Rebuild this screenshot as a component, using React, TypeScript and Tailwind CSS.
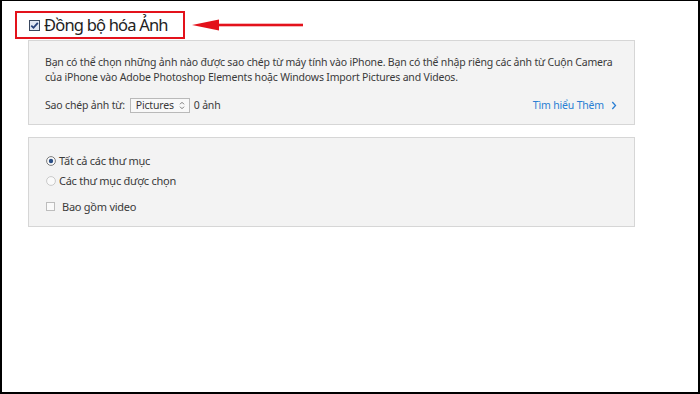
import React from "react";

const font = { fontFamily: '"Noto Sans", "Open Sans", sans-serif' };

function HeaderCheck() {
  return (
    <svg width="11" height="11" viewBox="0 0 11 11" className="shrink-0">
      <rect x="0.5" y="0.5" width="10" height="10" fill="#dfe6f3" stroke="#39475e" />
      <path d="M2.3 5.6 L4.5 7.8 L8.8 2.8" fill="none" stroke="#26417a" strokeWidth="1.8" />
    </svg>
  );
}

function Radio({ checked }: { checked?: boolean }) {
  return (
    <svg width="10" height="10" viewBox="0 0 10 10" className="shrink-0">
      <circle cx="5" cy="5" r="4.4" fill="#fafafa" stroke={checked ? "#7a7a7a" : "#c9c9c9"} />
      {checked && <circle cx="5" cy="5" r="2.2" fill="#2b4f86" />}
    </svg>
  );
}

function Box() {
  return (
    <svg width="9" height="9" viewBox="0 0 9 9" className="shrink-0">
      <rect x="0.5" y="0.5" width="8" height="8" fill="#fafafa" stroke="#bdbdbd" />
    </svg>
  );
}

export default function App() {
  return (
    <div
      className="w-[700px] h-[394px] bg-white border-t border-l-2 border-r-2 border-b-2 border-black overflow-hidden text-[#333] whitespace-nowrap"
      style={font}
    >
      <div className="flex items-center ml-[13px] mt-[10px]">
        <div className="w-[170px] h-[28px] border-2 border-[#e3121b] flex items-center pl-[12px] gap-[4px]">
          <HeaderCheck />
          <span className="text-[16.5px] leading-none text-[#222] tracking-[-0.8px]">Đồng bộ hóa Ảnh</span>
        </div>
        <svg width="115" height="14" viewBox="0 0 115 14" className="ml-[7px]">
          <polygon points="0,7 27,1.5 27,12.5" fill="#e3121b" />
          <rect x="26" y="5.7" width="85" height="2.6" fill="#e3121b" />
        </svg>
      </div>

      <div className="ml-[26px] mt-px w-[607px] h-[85px] bg-[#f3f3f3] border border-[#d6d6d6] pl-[16px] pr-[16px] pt-[14px] text-[10.5px] leading-[15px] text-[#3a3a3a] tracking-[-0.18px]">
        <p>
          Bạn có thể chọn những ảnh nào được sao chép từ máy tính vào iPhone. Bạn có thể nhập riêng các ảnh từ Cuộn Camera
          <br />
          của iPhone vào Adobe Photoshop Elements hoặc Windows Import Pictures and Videos.
        </p>
        <div className="flex items-center mt-[13px]">
          <span>Sao chép ảnh từ:</span>
          <div className="ml-[5px] h-[15px] w-[60px] border border-[#b9b9b9] bg-[#f8f8f8] flex items-center justify-between pl-[5px] pr-[4px]">
            <span className="leading-none">Pictures</span>
            <svg width="6" height="9" viewBox="0 0 6 9">
              <path d="M1 3.3 L3 1.3 L5 3.3 M1 5.7 L3 7.7 L5 5.7" fill="none" stroke="#777" strokeWidth="1" />
            </svg>
          </div>
          <span className="ml-[4px]">0 ảnh</span>
          <span className="ml-auto mr-[1px] flex items-center gap-[7px] text-[#2a7fd4]">
            Tìm hiểu Thêm
            <svg width="6" height="9" viewBox="0 0 6 9">
              <path d="M1.3 1 L4.5 4.5 L1.3 8" fill="none" stroke="#2a7fd4" strokeWidth="1.3" />
            </svg>
          </span>
        </div>
      </div>

      <div className="ml-[26px] mt-[12px] w-[607px] h-[90px] bg-[#f3f3f3] border border-[#d6d6d6] pl-[17px] pt-[15px] text-[11px] leading-[15px] text-[#3a3a3a] tracking-[-0.25px]">
        <div className="flex items-center gap-[3px]">
          <Radio checked />
          <span>Tất cả các thư mục</span>
        </div>
        <div className="flex items-center gap-[3px] mt-[5px]">
          <Radio />
          <span>Các thư mục được chọn</span>
        </div>
        <div className="flex items-center gap-[7px] mt-[11px]">
          <Box />
          <span>Bao gồm video</span>
        </div>
      </div>
    </div>
  );
}
